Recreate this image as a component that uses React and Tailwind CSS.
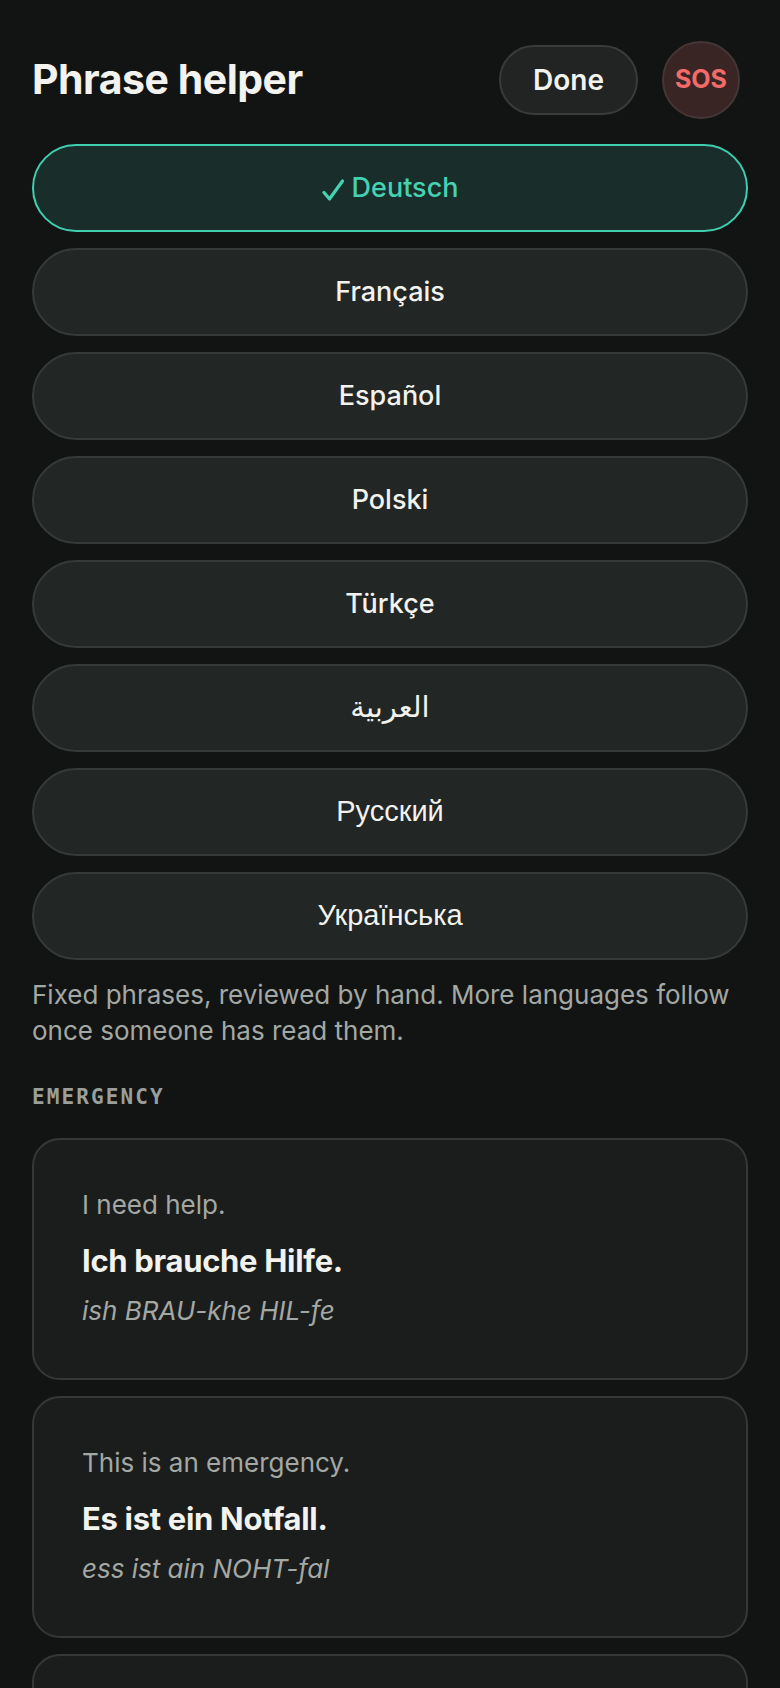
import { useState } from 'react'

const LANGS = [
  { id: 'de', label: 'Deutsch' },
  { id: 'fr', label: 'Français' },
  { id: 'es', label: 'Español' },
  { id: 'pl', label: 'Polski' },
  { id: 'tr', label: 'Türkçe' },
  { id: 'ar', label: 'العربية', other: true },
  { id: 'ru', label: 'Русский', other: true },
  { id: 'uk', label: 'Українська', other: true },
]

const PHRASES = [
  { en: 'I need help.', de: 'Ich brauche Hilfe.', say: 'ish BRAU-khe HIL-fe' },
  { en: 'This is an emergency.', de: 'Es ist ein Notfall.', say: 'ess ist ain NOHT-fal' },
  { en: 'Please call an ambulance.', de: 'Bitte rufen Sie einen Krankenwagen.', say: 'BIT-te ROO-fen zee AI-nen KRAN-ken-vah-gen' },
]

function Check() {
  return (
    <svg width="22" height="22" viewBox="0 0 22 22" className="mr-[8px] mt-[4px]" fill="none">
      <path d="M2 13.5 L7.5 20 L20.5 2" stroke="#45d2b3" strokeWidth="3.2" strokeLinecap="round" strokeLinejoin="round" />
    </svg>
  )
}

export default function App() {
  const [lang, setLang] = useState('de')

  return (
    <div className="min-h-screen bg-[#121413] px-8 pt-[41px] pb-10 font-['Inter',sans-serif] text-[#f2f2ee]">
      {/* Header */}
      <div className="flex h-[78px] items-center justify-between pr-2">
        <h1 className="text-[41px] font-bold tracking-[-0.012em]">Phrase helper</h1>
        <div className="flex items-center gap-6">
          <button className="h-[70px] w-[139px] rounded-full border-2 border-[#383c39] bg-[#212422] text-[28px] font-semibold text-[#f2f2ee]">
            Done
          </button>
          <button className="h-[78px] w-[78px] rounded-full border-2 border-[#443636] bg-[#3a2525] text-[25px] font-bold text-[#f26b6b]">
            SOS
          </button>
        </div>
      </div>

      {/* Language list */}
      <div className="mt-[25px] flex flex-col gap-4">
        {LANGS.map(l => {
          const active = l.id === lang
          return (
            <button
              key={l.id}
              onClick={() => setLang(l.id)}
              className={
                active
                  ? 'flex h-[88px] items-center justify-center rounded-full border-2 border-[#3fcfb0] bg-[#192d2a] text-[27px] font-medium text-[#45d2b3]'
                  : 'flex h-[88px] items-center justify-center rounded-full border-2 border-[#363b38] bg-[#222624] text-[27px] font-medium text-[#f2f2ee]'
              }
            >
              {active && <Check />}
              <span className={l.other ? "font-['Liberation_Sans','DejaVu_Sans',sans-serif] text-[29px] font-normal" : ''}>
                {l.label}
              </span>
            </button>
          )
        })}
      </div>

      <p className="mt-[17px] text-[26px] leading-[36px] text-[#a3a8a4]">
        Fixed phrases, reviewed by hand. More languages follow once someone has read them.
      </p>

      <div className="mt-[33px] font-['DejaVu_Sans_Mono',monospace] text-[21px] font-bold tracking-[0.1em] text-[#9a9f9b]">
        EMERGENCY
      </div>

      {/* Phrase cards */}
      <div className="mt-[24px] flex flex-col gap-4">
        {PHRASES.map(p => (
          <div key={p.en} className="rounded-[28px] border-2 border-[#343836] bg-[#1b1d1c] px-12 pt-[48px] pb-[50px]">
            <p className="text-[26px] leading-[34px] text-[#a3a8a4]">{p.en}</p>
            <p className="mt-[20px] text-[31px] font-bold leading-[38px] tracking-[-0.01em] text-[#f2f2ee]">{p.de}</p>
            <p className="mt-[14px] text-[26px] italic leading-[34px] text-[#a3a8a4]">{p.say}</p>
          </div>
        ))}
      </div>
    </div>
  )
}
